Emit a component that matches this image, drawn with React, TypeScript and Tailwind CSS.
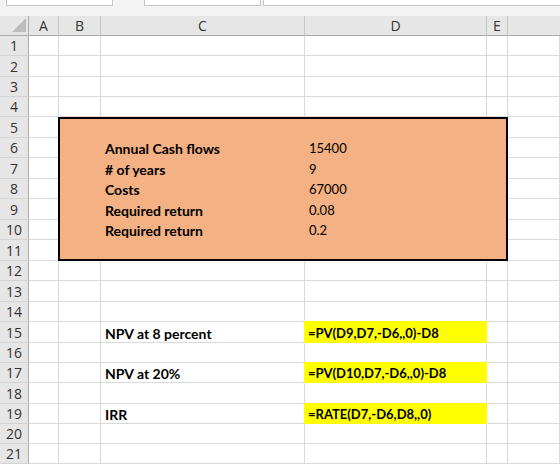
import { Fragment } from 'react';

const COLS = ['A', 'B', 'C', 'D', 'E', ''];
const COL_START = ['col-start-2', 'col-start-3', 'col-start-4', 'col-start-5', 'col-start-6', 'col-start-7'];

const ROW_START = [
  'row-start-2', 'row-start-3', 'row-start-4', 'row-start-5', 'row-start-6', 'row-start-7', 'row-start-8',
  'row-start-9', 'row-start-10', 'row-start-11', 'row-start-12', 'row-start-13', 'row-start-14', 'row-start-15',
  'row-start-16', 'row-start-17', 'row-start-18', 'row-start-19', 'row-start-20', 'row-start-21', 'row-start-22',
];

const inputs = [
  { row: 6, label: 'Annual Cash flows', value: '15400' },
  { row: 7, label: '# of years', value: '9' },
  { row: 8, label: 'Costs', value: '67000' },
  { row: 9, label: 'Required return', value: '0.08' },
  { row: 10, label: 'Required return', value: '0.2' },
];

const outputs = [
  { row: 15, label: 'NPV at 8 percent', formula: '=PV(D9,D7,-D6,,0)-D8' },
  { row: 17, label: 'NPV at 20%', formula: '=PV(D10,D7,-D6,,0)-D8' },
  { row: 19, label: 'IRR', formula: '=RATE(D7,-D6,D8,,0)' },
];

const cellFont = { fontFamily: 'Lato, "Liberation Sans", sans-serif' };
const headFont = { fontFamily: '"Open Sans", "Noto Sans", sans-serif' };

function TextCell({ row, col, className = '', children }: { row: number; col: string; className?: string; children: React.ReactNode }) {
  return (
    <div
      className={`${ROW_START[row - 1]} ${col} flex items-end pl-[4px] pb-[2px] leading-[15px] text-black ${className}`}
      style={cellFont}
    >
      <span className="relative z-10">{children}</span>
    </div>
  );
}

export default function App() {
  return (
    <div className="w-[560px] h-[464px] overflow-hidden bg-white">
      {/* formula bar remnants */}
      <div className="h-[16px] bg-[#f3f3f3]">
        <div className="flex h-[6px]">
          <div className="ml-[6px] w-[107px] bg-white border-x border-b border-[#c6c6c6]" />
          <div className="ml-[31px] w-[117px] bg-white border-x border-b border-[#c6c6c6]" />
          <div className="ml-[2px] flex-1 bg-white border-l border-b border-[#c6c6c6]" />
        </div>
      </div>

      <div className="grid grid-cols-[29px_30px_42px_204px_182px_21px_1fr] grid-rows-[20px_20px_21px_20px_20px_21px_20px_21px_20px_21px_20px_21px_20px_21px_20px_21px_20px_20px_21px_20px_20px_20px]">
        {/* corner */}
        <div className="col-start-1 row-start-1 bg-[#e6e6e6] border-r border-b border-[#ababab] relative">
          <svg width="29" height="20" className="absolute left-0 top-0">
            <polygon points="26,2 26,16 12,16" fill="#bdbdbd" />
          </svg>
        </div>
        {COLS.map((c, i) => (
          <div
            key={i}
            className={`${COL_START[i]} row-start-1 bg-[#e6e6e6] border-b border-[#ababab] flex items-center justify-center text-[14px] text-[#333] ${i < 5 ? 'border-r border-r-[#c8c8c8]' : ''}`}
            style={headFont}
          >
            {c}
          </div>
        ))}

        {ROW_START.map((rs, r) => (
          <Fragment key={r}>
            <div
              className={`${rs} col-start-1 bg-[#e6e6e6] border-r border-b border-[#ababab] border-b-[#d4d4d4] flex items-center justify-center text-[14px] text-[#333]`}
              style={headFont}
            >
              {r + 1}
            </div>
            {COL_START.map((cs, c) => (
              <div key={c} className={`${rs} ${cs} border-r border-b border-[#dadada]`} />
            ))}
          </Fragment>
        ))}

        {/* filled input block B5:E11 */}
        <div className="col-start-3 col-end-7 row-start-6 row-end-13 -ml-px bg-[#f4b183] border-2 border-black" />

        {inputs.map((it) => (
          <Fragment key={it.row}>
            <TextCell row={it.row} col="col-start-4" className="font-bold text-[14px]">{it.label}</TextCell>
            <TextCell row={it.row} col="col-start-5" className="text-[13px]">{it.value}</TextCell>
          </Fragment>
        ))}

        {outputs.map((it) => (
          <Fragment key={it.row}>
            <TextCell row={it.row} col="col-start-4" className="font-bold text-[14px]">{it.label}</TextCell>
            <TextCell row={it.row} col="col-start-5" className="font-bold text-[13px] -ml-px -mt-px bg-[#ffff00] relative z-10">{it.formula}</TextCell>
          </Fragment>
        ))}
      </div>
    </div>
  );
}
